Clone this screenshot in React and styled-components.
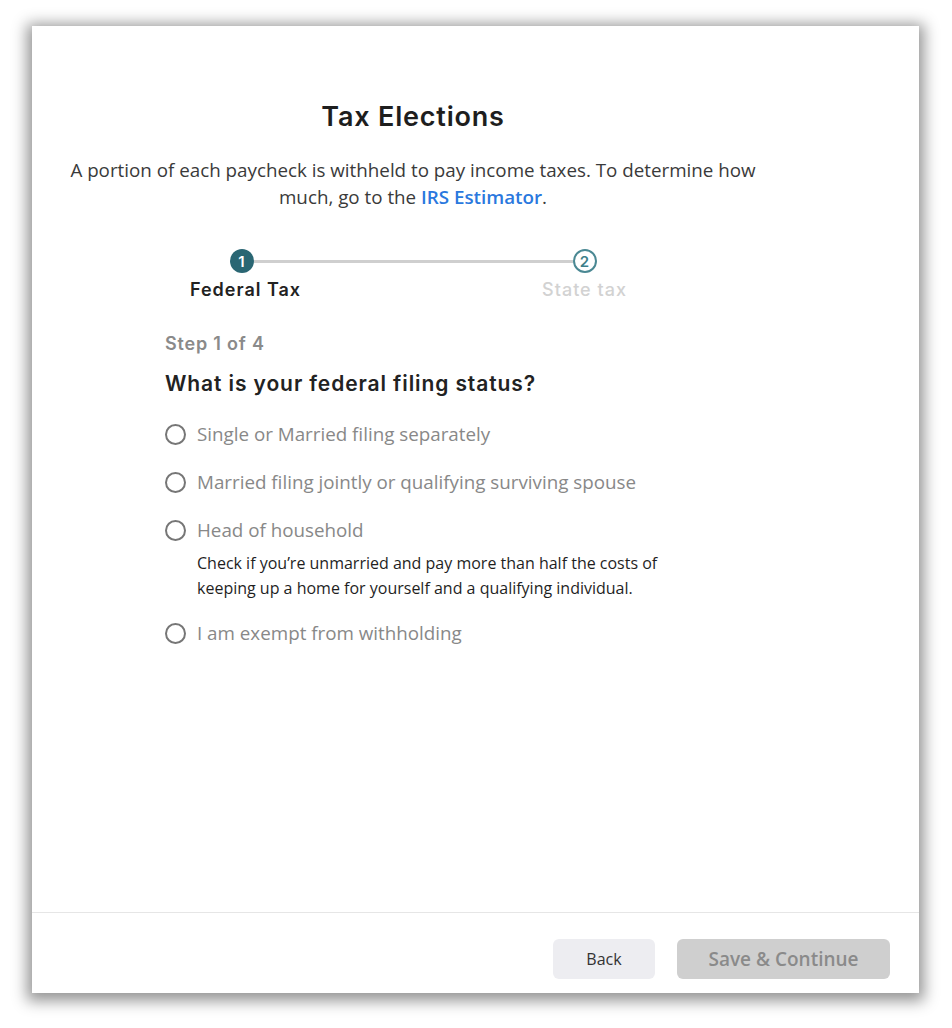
import React from "react";
import styled, { createGlobalStyle } from "styled-components";

const GlobalStyle = createGlobalStyle`
  html, body {
    margin: 0;
    padding: 0;
    background: #fff;
  }
  body {
    font-family: "Open Sans", "Liberation Sans", sans-serif;
  }
`;

const heading = `"Inter", "Noto Sans", "Liberation Sans", sans-serif`;

const options = [
  { id: "single", label: "Single or Married filing separately" },
  { id: "joint", label: "Married filing jointly or qualifying surviving spouse" },
  {
    id: "head",
    label: "Head of household",
    hint: "Check if you\u2019re unmarried and pay more than half the costs of keeping up a home for yourself and a qualifying individual.",
  },
  { id: "exempt", label: "I am exempt from withholding" },
];

export default function App() {
  return (
    <>
      <GlobalStyle />
      <Page>
        <Card>
          <Body>
            <Main>
              <Title>Tax Elections</Title>
              <Intro>
                A portion of each paycheck is withheld to pay income taxes. To
                determine how much, go to the <Link href="#">IRS Estimator</Link>.
              </Intro>

              <Stepper>
                <Track>
                  <StepDot active>1</StepDot>
                  <Connector />
                  <StepDot>2</StepDot>
                </Track>
                <Labels>
                  <StepLabel active>Federal Tax</StepLabel>
                  <StepLabel>State tax</StepLabel>
                </Labels>
              </Stepper>

              <Form>
                <StepCount>Step 1 of 4</StepCount>
                <Question>What is your federal filing status?</Question>
                <OptionList>
                  {options.map((o) => (
                    <Option key={o.id}>
                      <RadioRow>
                        <Radio />
                        <RadioText>{o.label}</RadioText>
                      </RadioRow>
                      {o.hint && <Hint>{o.hint}</Hint>}
                    </Option>
                  ))}
                </OptionList>
              </Form>
            </Main>
          </Body>

          <Footer>
            <Button>Back</Button>
            <Button primary disabled>
              Save &amp; Continue
            </Button>
          </Footer>
        </Card>
      </Page>
    </>
  );
}

const Page = styled.div`
  width: 952px;
  height: 1028px;
  padding: 26px 0 0 32px;
  box-sizing: border-box;
`;

const Card = styled.div`
  width: 887px;
  height: 967px;
  background: #fff;
  display: flex;
  flex-direction: column;
  box-shadow: 0 3px 14px 5px rgba(0, 0, 0, 0.42);
`;

const Body = styled.div`
  flex: 1;
  padding-top: 75px;
`;

const Main = styled.div`
  width: 710px;
  margin-left: 26px;
  display: flex;
  flex-direction: column;
  align-items: center;
`;

const Title = styled.h1`
  margin: 0;
  font-family: ${heading};
  font-size: 27px;
  line-height: 32px;
  font-weight: 600;
  letter-spacing: 0.8px;
  color: #1e1e1e;
`;

const Intro = styled.p`
  margin: 24px 0 0;
  font-size: 18.8px;
  line-height: 27px;
  color: #3a3a3a;
  text-align: center;
`;

const Link = styled.a`
  color: #2a78de;
  font-weight: 600;
  text-decoration: none;
`;

const Stepper = styled.div`
  width: 463px;
  margin-top: 38px;
  display: flex;
  flex-direction: column;
  gap: 6px;
`;

const Track = styled.div`
  display: flex;
  align-items: center;
  padding: 0 48px;
`;

const StepDot = styled.div`
  width: 24px;
  height: 24px;
  box-sizing: border-box;
  border-radius: 50%;
  display: flex;
  align-items: center;
  justify-content: center;
  font-family: ${heading};
  font-size: 15px;
  font-weight: 600;
  background: ${(p) => (p.active ? "#2a6673" : "#fff")};
  color: ${(p) => (p.active ? "#fff" : "#3d7f8a")};
  border: ${(p) => (p.active ? "none" : "2px solid #4a8893")};
`;

const Connector = styled.div`
  flex: 1;
  height: 3px;
  background: #cfcfcf;
`;

const Labels = styled.div`
  display: flex;
  justify-content: space-between;
  padding-left: 4px;
`;

const StepLabel = styled.div`
  width: 120px;
  text-align: center;
  font-family: ${heading};
  font-size: 18px;
  line-height: 22px;
  letter-spacing: 1px;
  font-weight: ${(p) => (p.active ? 600 : 500)};
  color: ${(p) => (p.active ? "#222" : "#d2d2d2")};
`;

const Form = styled.div`
  align-self: flex-start;
  margin-left: 107px;
  margin-top: 32px;
  display: flex;
  flex-direction: column;
`;

const StepCount = styled.div`
  font-family: ${heading};
  font-size: 18px;
  line-height: 22px;
  letter-spacing: 0.8px;
  font-weight: 600;
  color: #8a8a8a;
`;

const Question = styled.h2`
  margin: 16px 0 0;
  font-family: ${heading};
  font-size: 21px;
  line-height: 26px;
  letter-spacing: 0.9px;
  font-weight: 600;
  color: #222;
`;

const OptionList = styled.div`
  margin-top: 24px;
  display: flex;
  flex-direction: column;
  gap: 22px;
`;

const Option = styled.div`
  display: flex;
  flex-direction: column;
`;

const RadioRow = styled.label`
  display: flex;
  align-items: center;
  gap: 11px;
  cursor: pointer;
`;

const Radio = styled.span`
  width: 21px;
  height: 21px;
  box-sizing: border-box;
  border: 2px solid #767676;
  border-radius: 50%;
  flex-shrink: 0;
`;

const RadioText = styled.span`
  font-size: 18.8px;
  line-height: 26px;
  color: #888;
`;

const Hint = styled.p`
  margin: 8px 0 -3px 32px;
  max-width: 480px;
  font-size: 16px;
  line-height: 25px;
  color: #1f1f1f;
`;

const Footer = styled.div`
  border-top: 1px solid #e6e6e6;
  padding: 26px 29px 14px;
  display: flex;
  justify-content: flex-end;
  gap: 22px;
`;

const Button = styled.button`
  height: 40px;
  width: ${(p) => (p.primary ? "213px" : "102px")};
  border: none;
  border-radius: 6px;
  font-family: "Open Sans", "Liberation Sans", sans-serif;
  font-size: ${(p) => (p.primary ? "19px" : "16px")};
  font-weight: ${(p) => (p.primary ? 600 : 400)};
  background: ${(p) => (p.primary ? "#cfcfcf" : "#ededf1")};
  color: ${(p) => (p.primary ? "#8a8a8a" : "#333")};
  cursor: pointer;
`;
